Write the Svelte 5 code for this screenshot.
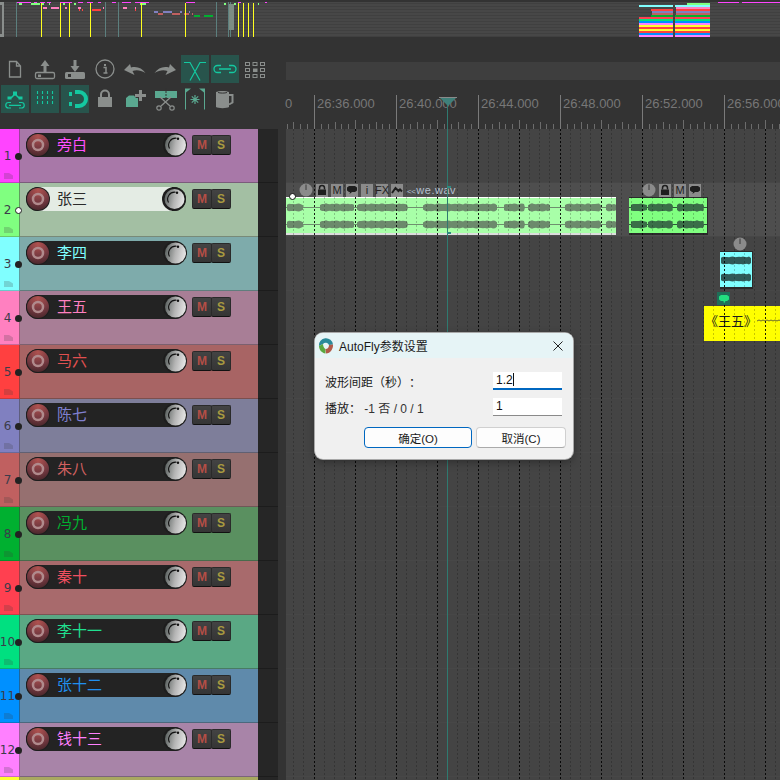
<script lang="ts">
	const tracks = [
		{ n: 1, name: '旁白', color: '#ff44ff', tint: '#a878a8', text: '#ff50ff' },
		{ n: 2, name: '张三', color: '#80ff80', tint: '#a3bfa3', text: '#2a2a2a', selected: true },
		{ n: 3, name: '李四', color: '#80ffff', tint: '#7eabab', text: '#80ffff' },
		{ n: 4, name: '王五', color: '#ff80c0', tint: '#a87e96', text: '#ff80c0' },
		{ n: 5, name: '马六', color: '#ff4040', tint: '#a86464', text: '#e05050' },
		{ n: 6, name: '陈七', color: '#8080c0', tint: '#7e7e9a', text: '#8080d0' },
		{ n: 7, name: '朱八', color: '#c06060', tint: '#967070', text: '#d06060' },
		{ n: 8, name: '冯九', color: '#00b030', tint: '#5a9060', text: '#00b030' },
		{ n: 9, name: '秦十', color: '#ff4050', tint: '#a86a6c', text: '#f05060' },
		{ n: 10, name: '李十一', color: '#00e080', tint: '#5aa884', text: '#20e090' },
		{ n: 11, name: '张十二', color: '#0090ff', tint: '#5f8aab', text: '#2090f0' },
		{ n: 12, name: '钱十三', color: '#ff80ff', tint: '#a884a8', text: '#ff80ff' },
		{ n: 13, name: '', color: '#ffff30', tint: '#a8a860', text: '#ffff30' }
	];

	const times = ['26:36.000', '26:40.000', '26:44.000', '26:48.000', '26:52.000', '26:56.000'];

	// ruler ticks and grid, everything hangs off the 41px beat
	const rulerTicks = Array.from({ length: 73 }, (_, i) => {
		const x = 28 + (i - 4) * 6.835;
		const h = i % 12 === 4 ? 34 : i % 6 === 4 ? 9 : i % 3 === 1 ? 7 : 5;
		return { x: Math.round(x), h };
	});
	const minorLines = Array.from({ length: 49 }, (_, i) => Math.round(i * 10.25) + 7);
	const majorLines = Array.from({ length: 12 }, (_, i) => 28 + i * 41);

	const bars = (color: string, y: number, h: number, list: [number, number][]) =>
		list.map(([x, w]) => ({ x, y, w, h, color }));

	const overviewBars = [
		...bars('#ff44ff', 2, 1, [[17, 14], [34, 3], [40, 5], [47, 4], [60, 12], [78, 5], [87, 6], [98, 3], [112, 4], [122, 9], [135, 14], [186, 9], [238, 3], [265, 2], [718, 21], [742, 38]]),
		...bars('#80ff80', 3, 2, [[19, 3], [31, 9], [41, 3], [49, 1], [63, 2], [74, 2], [140, 6], [224, 2], [234, 2], [258, 1], [687, 23]]),
		...bars('#ff80c0', 7, 2, [[43, 4], [51, 8], [65, 2], [78, 3], [103, 1], [123, 4], [135, 1]]),
		...bars('#ff4040', 9, 2, [[79, 1], [82, 1], [92, 9], [135, 1]]),
		...bars('#8080c0', 11, 2, [[154, 4], [163, 9], [180, 2], [189, 1]]),
		...bars('#c06060', 13, 2, [[158, 5], [172, 8], [184, 5], [192, 1]]),
		...bars('#00b030', 15, 2, [[194, 6], [204, 9]]),
		// the two clusters on the right
		...bars('#80ffff', 5, 2, [[639, 34], [675, 35]]),
		...bars('#ff80c0', 7, 2, [[676, 34]]),
		...bars('#ff4040', 9, 2, [[651, 22], [676, 34]]),
		...bars('#8080c0', 11, 2, [[652, 21], [676, 34]]),
		...bars('#c06060', 13, 2, [[652, 21], [676, 34]]),
		...bars('#00b030', 15, 2, [[651, 22], [675, 35]])
	];

	const stack = ['#ff4050', '#00e080', '#0090ff', '#ff80ff', '#ffff30', '#ff4040', '#ffff30', '#ff4040', '#0090ff', '#ff80ff', '#80ff80'];

	const yellowLines = [41, 60, 69, 90, 141, 185, 238, 243, 248, 253];
	const tealLines = [16, 105, 118, 216, 228, 230];

	function wave(segments: [number, number][], cy: number, amp: number): string {
		let out = '';
		for (const [a, b] of segments) {
			let top = `M${a} ${cy}`;
			let bottom = '';
			for (let x = a; x <= b; x += 2) {
				const k = 0.86 + 0.14 * Math.sin(x * 0.9) * Math.cos(x * 0.23);
				const edge = Math.min(1, Math.min(x - a + 2, b - x + 2) / 3);
				const d = (amp * k * edge).toFixed(1);
				top += `L${x} ${cy - +d}`;
				bottom = `L${x} ${cy + +d}` + bottom;
			}
			out += top + `L${b} ${cy}` + bottom + 'Z';
		}
		return out;
	}

	const segA: [number, number][] = [[1, 17], [34, 68], [71, 122], [137, 211], [218, 239], [242, 264], [279, 315], [320, 330]];
	const segB: [number, number][] = [[2, 18], [19, 44], [48, 75]];
	const segC: [number, number][] = [[1, 31]];
</script>

{#snippet knob(sel: boolean)}
	<svg class="knob" class:knob-sel={sel} viewBox="0 0 24 24" width="24" height="24">
		<circle cx="12" cy="12" r="12" fill="#1d1d1d" />
		<circle cx="12.500" cy="12" r={sel ? 10 : 10.5} fill="url(#knobfill)" />
		<path d="M6.500 15.500A7 7 0 0 1 13.500 5.200" fill="none" stroke="#111" stroke-width="1.100" />
		<circle cx="15" cy="5.800" r="1.200" fill="#111" />
	</svg>
{/snippet}

{#snippet clipIcon(kind: string)}
	<span class="clip-btn">
		{#if kind === 'lock'}
			<svg viewBox="0 0 12 12" width="12" height="12"><path d="M3.500 5.500V4a2.500 2.500 0 0 1 5 0v1.500" fill="none" stroke="#1e1e1e" stroke-width="1.500" /><rect x="2" y="5.500" width="8" height="5.500" fill="#1e1e1e" /></svg>
		{:else if kind === 'note'}
			<svg viewBox="0 0 12 12" width="12" height="12"><path d="M3 2h6l2 1.500v3L9 8H6l-2.500 2 .5-2H3L1 6.500v-3z" fill="#1e1e1e" /></svg>
		{:else if kind === 'env'}
			<svg viewBox="0 0 12 12" width="12" height="12"><path d="M1 9l3.500-5 3 3 1.500-1.500L11 7.500" fill="none" stroke="#1e1e1e" stroke-width="2" /></svg>
		{:else}
			{kind}
		{/if}
	</span>
{/snippet}

{#snippet clock()}
	<svg class="clock" viewBox="0 0 14 14" width="14" height="14"><circle cx="7" cy="7" r="6.500" fill="#8b8b8b" /><path d="M7 1.500V7" stroke="#3a3a3a" stroke-width="1" /></svg>
{/snippet}

<div class="daw">
	<svg class="defs" width="0" height="0" aria-hidden="true">
		<defs>
			<linearGradient id="knobfill" x1="0" y1="0.4" x2="1" y2="0.6">
				<stop offset="0" stop-color="#5c6361" />
				<stop offset="0.5" stop-color="#b4b4b4" />
				<stop offset="1" stop-color="#e8e8e8" />
			</linearGradient>
			<radialGradient id="recfill" cx="0.5" cy="0.1" r="0.95">
				<stop offset="0" stop-color="#b0524f" />
				<stop offset="0.6" stop-color="#733840" />
				<stop offset="1" stop-color="#46262a" />
			</radialGradient>
		</defs>
	</svg>

	<!-- overview strip -->
	<svg class="overview" viewBox="0 0 780 37" width="780" height="37" shape-rendering="crispEdges">
		<rect x="0" y="2" width="780" height="35" fill="#474747" />
		{#each Array.from({ length: 12 }, (_, i) => i) as i}
			<rect x="0" y={3 + i * 3} width="780" height="1" fill="#404040" />
		{/each}
		<rect x="0" y="2" width="4" height="35" fill="#8a8e8c" />
		<rect x="0" y="5" width="2" height="29" fill="#4a4a4a" />
		{#each tealLines as x}
			<rect {x} y="2" width="1" height="35" fill="#5c7f7e" />
		{/each}
		<rect x="229" y="4" width="5" height="26" fill="#7c8c84" />
		{#each overviewBars as b}
			<rect x={b.x} y={b.y} width={b.w} height={b.h} fill={b.color} />
		{/each}
		{#each yellowLines as x}
			<rect {x} y="3" width="1" height="34" fill="#ffff20" />
		{/each}
		{#each stack as c, i}
			<rect x="639" y={17 + i * 2} width="34" height="2" fill={c} />
			<rect x="675" y={17 + i * 2} width="35" height="2" fill={c} />
		{/each}
	</svg>

	<!-- toolbar + ruler -->
	<div class="top">
		<div class="tools">
			<span class="tool"><svg viewBox="0 0 28 28"><path d="M8.500 6.500h7l4 4.500v11h-11zM15.500 6.500V11h4" fill="none" stroke="#8a8e8c" stroke-width="1.300" /></svg></span>
			<span class="tool"><svg viewBox="0 0 28 28"><path d="M14 5l4.500 6H15.500v6h-3v-6H9.500z" fill="#8a8e8c" /><rect x="4.500" y="17.500" width="19" height="6" rx="1.500" fill="none" stroke="#8a8e8c" stroke-width="1.300" /><rect x="7" y="19.500" width="3" height="2.500" fill="#8a8e8c" /></svg></span>
			<span class="tool"><svg viewBox="0 0 28 28"><path d="M14 17l-4.500-6H12.500V5h3v6h3z" fill="#8a8e8c" /><rect x="4" y="17" width="20" height="7" rx="1.500" fill="#8a8e8c" /><rect x="7" y="19" width="3" height="3" fill="#333" /></svg></span>
			<span class="tool"><svg viewBox="0 0 28 28"><circle cx="14" cy="14" r="9" fill="none" stroke="#8a8e8c" stroke-width="1.300" /><path d="M12.500 12.500h2.500v5.500h1.500M12.500 18h3" fill="none" stroke="#8a8e8c" stroke-width="1.500" /><rect x="13" y="9" width="2" height="2" fill="#8a8e8c" /></svg></span>
			<span class="tool"><svg viewBox="0 0 28 28"><path d="M3 15l6-6 1 3.500c6-1.500 11 .500 14.500 5.500-5-3-9-3.500-13-2l2 4z" fill="#8a8e8c" /></svg></span>
			<span class="tool"><svg viewBox="0 0 28 28"><path d="M25 15l-6-6-1 3.500c-6-1.500-11 .500-14.500 5.500 5-3 9-3.500 13-2l-2 4z" fill="#8a8e8c" /></svg></span>
			<span class="tool on"><svg viewBox="0 0 28 28"><path d="M3 7.500h6l10 18M25 7.500h-6l-10 18" fill="none" stroke="#14c8a0" stroke-width="1.200" /></svg></span>
			<span class="tool on"><svg viewBox="0 0 28 28"><path d="M10 10.500H6.500a3.500 3.500 0 0 0 0 7H10M18 10.500h3.500a3.500 3.500 0 0 1 0 7H18M8 14h12" fill="none" stroke="#14c8a0" stroke-width="1.300" /></svg></span>
			<span class="tool"><svg viewBox="0 0 28 28"><g fill="none" stroke="#8a8e8c" stroke-width="1"><rect x="4.500" y="7.500" width="4" height="3" /><rect x="12" y="7.500" width="4" height="3" /><rect x="19.500" y="7.500" width="4" height="3" /><rect x="4.500" y="13.500" width="4" height="3" /><rect x="19.500" y="13.500" width="4" height="3" /><rect x="4.500" y="19.500" width="4" height="3" /><rect x="12" y="19.500" width="4" height="3" /><rect x="19.500" y="19.500" width="4" height="3" /></g><rect x="12" y="13.500" width="4.500" height="3.500" fill="#8a8e8c" /></svg></span>

			<span class="tool on"><svg viewBox="0 0 28 28"><path d="M10 13l4-4 4 4" fill="none" stroke="#14c8a0" stroke-width="1.500" /><path d="M12 6.500h4v4h-4zM6.500 11.500h4v3h-4zM17.500 11.500h4v3h-4z" fill="#14c8a0" /><path d="M10 17.500H7.500a2.700 2.700 0 0 0 0 5.500H10M18 17.500h2.500a2.700 2.700 0 0 1 0 5.500H18M8 20.300h12" fill="none" stroke="#14c8a0" stroke-width="1.200" /></svg></span>
			<span class="tool on"><svg viewBox="0 0 28 28"><path d="M6.500 6v15M11.500 6v15M16.500 6v15M21.500 6v15" fill="none" stroke="#14c8a0" stroke-width="1.100" stroke-dasharray="3 2" /></svg></span>
			<span class="tool on"><svg viewBox="0 0 28 28"><path d="M14 7h4a7 7 0 0 1 0 14h-4" fill="none" stroke="#14c8a0" stroke-width="4" /><rect x="8" y="7" width="3" height="4" fill="#14c8a0" /><rect x="8" y="17" width="3" height="4" fill="#14c8a0" /></svg></span>
			<span class="tool"><svg viewBox="0 0 28 28"><path d="M10 12V9.500a4 4 0 0 1 8 0V12" fill="none" stroke="#8a8e8c" stroke-width="2" /><rect x="7" y="12" width="14" height="10" fill="#8a8e8c" /></svg></span>
			<span class="tool"><svg viewBox="0 0 28 28"><path d="M5 13l3-2.500h5l2 2.500h2v9H5z" fill="#5aa890" /><path d="M18 5h3v4h4v3h-4v4h-3v-4h-4V9h4z" fill="#8a8e8c" /></svg></span>
			<span class="tool"><svg viewBox="0 0 28 28"><rect x="4" y="6" width="22" height="7" fill="#5aa890" /><path d="M15 3v21" stroke="#333" stroke-width="1" stroke-dasharray="2 1" /><path d="M9 12l10 9M20 12L10 21" stroke="#8a8e8c" stroke-width="1.300" /><circle cx="8" cy="23" r="2.200" fill="none" stroke="#8a8e8c" stroke-width="1.200" /><circle cx="21" cy="23" r="2.200" fill="none" stroke="#8a8e8c" stroke-width="1.200" /></svg></span>
			<span class="tool"><svg viewBox="0 0 28 28"><path d="M4.500 3.500v21M23.500 3.500v21" stroke="#5aa890" stroke-width="1" /><path d="M5 3.500l5 0-5 4zM23 3.500l-5 0 5 4z" fill="#5aa890" /><path d="M14 10v9M9.500 14.500h9M10.800 11.300l6.400 6.400M17.200 11.300l-6.400 6.400" stroke="#5aa890" stroke-width="1.200" /></svg></span>
			<span class="tool"><svg viewBox="0 0 28 28"><path d="M5 7c2-1.500 11-1.500 13 0v15c-2 1.500-11 1.500-13 0z" fill="#8a8e8c" /><path d="M18 10h3.500v7.500L18 19.500" fill="none" stroke="#8a8e8c" stroke-width="2" /><path d="M7 7.500c2 .800 7 .800 9 0" fill="none" stroke="#333" stroke-width="1" /></svg></span>
		</div>
		<div class="top-right">
			<div class="strip"></div>
			<div class="ruler">
				<span class="zero">0</span>
				{#each times as t}
					<span class="time">{t}</span>
				{/each}
				<svg class="ticks" viewBox="0 0 494 37" width="494" height="37" shape-rendering="crispEdges">
					{#each rulerTicks as t}
						<rect x={t.x} y={37 - t.h} width="1" height={t.h} fill={t.h > 20 ? '#7a7a7a' : '#6c6c6c'} />
					{/each}
					<rect x="161" y="10" width="1" height="27" fill="#2f7a70" />
				</svg>
				<svg class="cursor" viewBox="0 0 18 9" width="18" height="9"><path d="M0 0h18l-9 9z" fill="#3f807a" /><path d="M0 .5h18" stroke="#8a8a8a" stroke-width="1" /></svg>
			</div>
		</div>
	</div>

	<div class="main">
		<div class="tracklist">
			{#each tracks as t (t.n)}
				<div class="track" class:selected={t.selected} style="--c:{t.color};--tint:{t.tint};--txt:{t.text}">
					<div class="num">
						{#if t.name}
							<span class="num-label">{t.n}</span>
							<svg class="folder" viewBox="0 0 9 6" width="9" height="6"><path d="M0 0h5l4 2.500V6H0z" /></svg>
							<span class="dot"></span>
						{/if}
					</div>
					{#if t.name}
						<div class="panel">
							<div class="pill">
								<svg class="rec" viewBox="0 0 24 24" width="24" height="24">
									<circle cx="12" cy="12" r="12" fill="#1d1d1d" />
									<circle cx="12" cy="12" r="11" fill="url(#recfill)" />
									<circle cx="12" cy="12" r="5" fill="none" stroke="#b08a8c" stroke-width="2.500" />
								</svg>
								<span class="name">{t.name}</span>
								{@render knob(!!t.selected)}
							</div>
							<div class="ms">
								<span class="ms-btn m">M</span>
								<span class="ms-btn s">S</span>
							</div>
						</div>
					{/if}
				</div>
			{/each}
		</div>
		<div class="gutter">
			{#each tracks as t (t.n)}
				<div class="gutter-row"></div>
			{/each}
		</div>
		<div class="gap"></div>

		<div class="arrange">
			{#each tracks as t (t.n)}
				<div class="lane" class:lane-sel={t.selected}></div>
			{/each}

			<!-- clips sit on the timeline by time position -->
			<div class="clip clip-a">
				<svg viewBox="0 0 330 38" width="330" height="38">
					<path d="M0 9.500H330M0 26.500H330" stroke="#6f8f6f" stroke-width="1" />
					<path d={wave(segA, 9.5, 4.2)} fill="#6c8a6c" />
					<path d={wave(segA, 26.5, 4.2)} fill="#6c8a6c" />
				</svg>
			</div>
			<div class="clip clip-b">
				<svg viewBox="0 0 78 37" width="78" height="37">
					<path d="M0 9.500H78M0 26.500H78" stroke="#2e5a3a" stroke-width="1" />
					<path d={wave(segB, 9.5, 4.2)} fill="#3a6e48" />
					<path d={wave(segB, 26.5, 4.2)} fill="#3a6e48" />
				</svg>
			</div>
			<div class="clip clip-c">
				<svg viewBox="0 0 32 36" width="32" height="36">
					<path d={wave(segC, 8.5, 4.2)} fill="#2f5a58" />
					<path d={wave(segC, 25.5, 4.2)} fill="#2f5a58" />
				</svg>
			</div>
			<div class="clip clip-d">
				<span class="clip-d-text">《王五》</span>
				<svg class="squiggle" viewBox="0 0 24 3" width="24" height="3"><path d="M0 2l2-1 2 1 2-1 2 1 2-1 2 1 2-1 2 1 2-1 2 1 2-1 2 1" fill="none" stroke="#6a6a30" stroke-width="1" /></svg>
			</div>

			<svg class="grid" viewBox="0 0 494 651" width="494" height="651" shape-rendering="crispEdges">
				{#each minorLines as x}
					<path d="M{x + 0.5} 0V651" stroke="rgba(0,0,0,0.22)" stroke-dasharray="2 2" />
				{/each}
				{#each majorLines as x}
					<path d="M{x + 0.5} 0V651" stroke="rgba(0,0,0,0.85)" stroke-dasharray="2 2" />
				{/each}
			</svg>

			<div class="clip-tools tools-a">
				{@render clock()}
				{@render clipIcon('lock')}
				{@render clipIcon('M')}
				{@render clipIcon('note')}
				{@render clipIcon('i')}
				{@render clipIcon('FX')}
				{@render clipIcon('env')}
				<span class="clip-name"><span class="arrows">&lt;&lt;</span>we.wav</span>
			</div>
			<span class="handle"></span>

			<div class="clip-tools tools-b">
				{@render clock()}
				{@render clipIcon('lock')}
				{@render clipIcon('M')}
				{@render clipIcon('note')}
			</div>

			<div class="clip-tools tools-c">{@render clock()}</div>
			<span class="note-btn"><svg viewBox="0 0 12 12" width="12" height="12"><path d="M3 2h6l2 1.500v3L9 8H7.500L6 10.500 5.500 8H3L1 6.500v-3z" fill="#22e080" /></svg></span>

			<span class="playhead"></span>
			<span class="mark mark-top"></span>
			<span class="mark mark-bot"></span>
		</div>
	</div>

	<!-- dialog -->
	<div class="dialog">
		<div class="titlebar">
			<svg viewBox="0 0 16 16" width="16" height="16">
				<path d="M1 8a7 7 0 0 1 14-1.500L11 7A3.500 3.500 0 0 0 5 6z" fill="#2a8a9a" />
				<path d="M1 8c0 3.500 2.500 7 6.500 7.500L7.500 11C6 10.500 5 8 5 6z" fill="#5aa840" />
				<path d="M15 6.500c.500 4-2.500 9-7 9L7.500 11C10 11 11 9 11 7z" fill="#b05a48" />
			</svg>
			<span class="title">AutoFly参数设置</span>
			<svg class="close" viewBox="0 0 12 12" width="12" height="12"><path d="M1.500 1.500l9 9M10.500 1.500l-9 9" stroke="#222" stroke-width="1" /></svg>
		</div>
		<div class="body">
			<div class="field">
				<span class="label">波形间距（秒）：</span>
				<span class="input active">1.2<span class="caret"></span></span>
			</div>
			<div class="field field-2">
				<span class="label">播放： <span class="hint">-1 否 / 0 / 1</span></span>
				<span class="input">1</span>
			</div>
			<div class="actions">
				<button type="button" class="btn primary">确定(O)</button>
				<button type="button" class="btn">取消(C)</button>
			</div>
		</div>
	</div>
</div>

<style>
	:global(body) {
		background: #333;
		margin: 0;
	}

	.daw {
		background: #333;
		display: flex;
		flex-direction: column;
		font-family: 'Liberation Sans', 'Noto Sans CJK SC', sans-serif;
		height: 780px;
		overflow: hidden;
		position: relative;
		text-spacing-trim: space-all;
		width: 780px;
	}

	.defs {
		position: absolute;
	}

	.overview {
		display: block;
		flex: none;
	}

	.top {
		display: flex;
		flex: none;
		height: 92px;
	}

	.tools {
		align-content: start;
		display: grid;
		flex: none;
		gap: 2px;
		grid-template-columns: repeat(9, 28px);
		grid-auto-rows: 28px;
		padding: 18px 0 0 1px;
		width: 285px;
	}

	.tool {
		display: block;
	}

	.tool svg {
		display: block;
		height: 28px;
		width: 28px;
	}

	.tool.on {
		background: #28544c;
	}

	.top-right {
		display: flex;
		flex: 1;
		flex-direction: column;
	}

	.strip {
		background: #3e3e3e;
		height: 18px;
		margin-top: 25px;
	}

	.ruler {
		align-items: flex-start;
		display: flex;
		height: 37px;
		margin-top: 12px;
		position: relative;
	}

	.zero,
	.time {
		color: #777;
		font-size: 13px;
		line-height: 15px;
		padding-top: 4px;
	}

	.zero {
		margin-left: -1px;
		width: 32px;
	}

	.time {
		flex: none;
		width: 82px;
	}

	.ticks {
		left: 0;
		position: absolute;
		top: 0;
	}

	.cursor {
		left: 153px;
		position: absolute;
		top: 5px;
	}

	.main {
		display: flex;
		flex: 1;
		min-height: 0;
		overflow: hidden;
	}

	.tracklist {
		flex: none;
		width: 258px;
	}

	.track {
		background: var(--tint);
		box-shadow: inset 0 -1px 0 rgba(40, 40, 40, 0.35);
		display: flex;
		height: 54px;
	}

	.num {
		align-items: center;
		background: var(--c);
		border-right: 1px solid rgba(60, 60, 60, 0.5);
		box-shadow: inset 0 -1px 0 rgba(40, 40, 40, 0.25);
		box-sizing: border-box;
		display: flex;
		flex: none;
		flex-direction: column;
		padding-top: 19px;
		position: relative;
		width: 20px;
	}

	.num-label {
		color: #3c3c4a;
		font-family: 'DejaVu Sans', sans-serif;
		font-size: 12px;
		line-height: 16px;
		padding-right: 4px;
	}

	.folder {
		fill: rgba(60, 60, 60, 0.22);
		margin: 9px 3px 0 0;
	}

	.dot {
		background: #222;
		border-radius: 50%;
		height: 7px;
		position: absolute;
		right: -3px;
		top: 24px;
		width: 7px;
	}

	.selected .dot {
		background: #fff;
		border: 1px solid #222;
		box-sizing: border-box;
	}

	.panel {
		display: flex;
		flex: 1;
		gap: 6px;
		padding: 4px 0 0 6px;
	}

	.pill {
		align-items: center;
		background: #232323;
		border-radius: 12px;
		box-sizing: border-box;
		display: flex;
		height: 24px;
		width: 160px;
	}

	.selected .pill {
		background: linear-gradient(90deg, #232323 0 12px, #e4ece4 12px 146px, #232323 146px);
	}

	.rec {
		flex: none;
	}

	.name {
		color: var(--txt);
		flex: 1;
		font-family: 'Noto Sans CJK SC', sans-serif;
		font-size: 15px;
		font-weight: 400;
		line-height: 22px;
		padding-bottom: 2px;
		padding-left: 7px;
	}

	.knob {
		flex: none;
		margin-right: -1px;
	}

	.knob-sel {
		margin-right: 0;
	}

	.ms {
		display: flex;
		height: 20px;
		margin-top: 2px;
	}

	.ms-btn {
		background: linear-gradient(#434343, #353535);
		border: 1px solid #2a2a2a;
		border-bottom: 1px solid #111;
		border-radius: 2px;
		box-sizing: border-box;
		font-size: 12px;
		font-weight: bold;
		height: 20px;
		line-height: 18px;
		text-align: center;
		width: 20px;
	}

	.ms-btn.m {
		color: #b44e46;
	}

	.ms-btn.s {
		color: #a89a40;
		margin-left: -1px;
	}

	.gutter {
		background: #262626;
		flex: none;
		width: 20px;
	}

	.gutter-row {
		box-shadow: inset 0 -1px 0 #1c1c1c;
		height: 54px;
	}

	.gap {
		background: #333;
		flex: none;
		width: 8px;
	}

	.arrange {
		background: #444;
		flex: none;
		position: relative;
		width: 494px;
	}

	.lane {
		box-shadow: inset 0 -1px 0 #474747;
		height: 54px;
	}

	.lane-sel {
		background: #4e4e4e;
	}

	.grid {
		left: 0;
		position: absolute;
		top: 0;
	}

	.clip {
		box-sizing: border-box;
		overflow: hidden;
		position: absolute;
	}

	.clip svg {
		display: block;
	}

	.clip-a {
		background: #a8ffa8;
		border-bottom: 2px solid #ddd;
		border-top: 1px solid #fff;
		height: 38px;
		left: 0;
		top: 68px;
		width: 330px;
	}

	.clip-b {
		background: #80ff80;
		border-bottom: 2px solid #2a2a2a;
		border-right: 1px solid #2a2a2a;
		border-top: 1px solid #2a2a2a;
		height: 38px;
		left: 343px;
		top: 68px;
		width: 79px;
	}

	.clip-c {
		background: #80ffff;
		border-bottom: 2px solid #2a2a2a;
		border-right: 1px solid #2a2a2a;
		border-top: 1px solid #2a2a2a;
		height: 38px;
		left: 434px;
		top: 122px;
		width: 33px;
	}

	.clip-d {
		align-items: center;
		background: #ffff00;
		display: flex;
		height: 35px;
		left: 418px;
		padding-bottom: 6px;
		top: 177px;
		width: 76px;
	}

	.clip-d-text {
		color: #1c1c1c;
		flex: none;
		font-family: 'Noto Sans CJK SC', sans-serif;
		font-size: 13px;
		font-weight: 400;
		margin-left: 1px;
		white-space: nowrap;
	}

	.squiggle {
		flex: none;
	}

	.clip-tools {
		align-items: center;
		display: flex;
		gap: 3px;
		height: 14px;
		position: absolute;
	}

	.tools-a {
		left: 13px;
		top: 54px;
	}

	.tools-b {
		left: 356px;
		top: 54px;
	}

	.tools-c {
		left: 447px;
		top: 108px;
	}

	.clip-btn {
		align-items: center;
		background: #8b8b8b;
		color: #1e1e1e;
		display: flex;
		font-size: 11px;
		height: 13px;
		justify-content: center;
		line-height: 13px;
		width: 12px;
	}

	.clip-name {
		color: #b4c0d0;
		font-size: 11px;
		letter-spacing: 0.5px;
		margin-left: 1px;
		white-space: nowrap;
	}

	.arrows {
		font-size: 8px;
		letter-spacing: -0.5px;
		margin-right: 1px;
	}

	.handle {
		background: #fff;
		border: 1px solid #111;
		border-radius: 50%;
		box-sizing: border-box;
		height: 7px;
		left: 3px;
		position: absolute;
		top: 64px;
		width: 7px;
	}

	.note-btn {
		align-items: center;
		background: #1f6e58;
		display: flex;
		height: 13px;
		justify-content: center;
		left: 431px;
		position: absolute;
		top: 163px;
		width: 13px;
	}

	.playhead {
		background: #2f7a70;
		height: 651px;
		left: 161px;
		position: absolute;
		top: 0;
		width: 1px;
	}

	.mark {
		background: #2f8a80;
		height: 2px;
		left: 161px;
		position: absolute;
		width: 4px;
	}

	.mark-top {
		top: 57px;
	}

	.mark-bot {
		top: 103px;
	}

	.dialog {
		background: #f0f0f0;
		border-radius: 8px;
		box-shadow: 0 0 0 1px #a8a8a8, 0 3px 10px rgba(0, 0, 0, 0.35);
		color: #1a1a1a;
		font-family: 'Liberation Sans', 'Noto Sans CJK SC', sans-serif;
		font-size: 12px;
		height: 126px;
		left: 315px;
		overflow: hidden;
		position: absolute;
		top: 333px;
		width: 258px;
	}

	.titlebar {
		align-items: center;
		background: #e6f4f6;
		display: flex;
		gap: 5px;
		height: 25px;
		padding: 0 9px 0 3px;
	}

	.title {
		flex: 1;
		font-size: 12px;
	}

	.body {
		display: flex;
		flex-direction: column;
		padding: 14px 11px 0 10px;
	}

	.field {
		align-items: center;
		display: flex;
		height: 18px;
		justify-content: space-between;
	}

	.field-2 {
		margin-top: 8px;
	}

	.hint {
		color: #333;
	}

	.input {
		background: #fff;
		border-bottom: 1px solid #8a8a8a;
		box-sizing: border-box;
		color: #111;
		font-size: 12px;
		height: 18px;
		line-height: 17px;
		padding-left: 3px;
		width: 69px;
	}

	.input.active {
		border-bottom: 2px solid #0067c0;
	}

	.caret {
		background: #111;
		display: inline-block;
		height: 13px;
		vertical-align: -2px;
		width: 1px;
	}

	.actions {
		display: flex;
		gap: 4px;
		justify-content: flex-end;
		margin-right: -4px;
		margin-top: 11px;
	}

	.btn {
		background: #fdfdfd;
		border: 1px solid #d0d0d0;
		border-bottom-color: #aaa;
		border-radius: 4px;
		color: #1a1a1a;
		font-family: inherit;
		font-size: 11.5px;
		height: 21px;
		padding: 0;
		width: 90px;
	}

	.btn.primary {
		border: 1px solid #0067c0;
		width: 108px;
	}
</style>
